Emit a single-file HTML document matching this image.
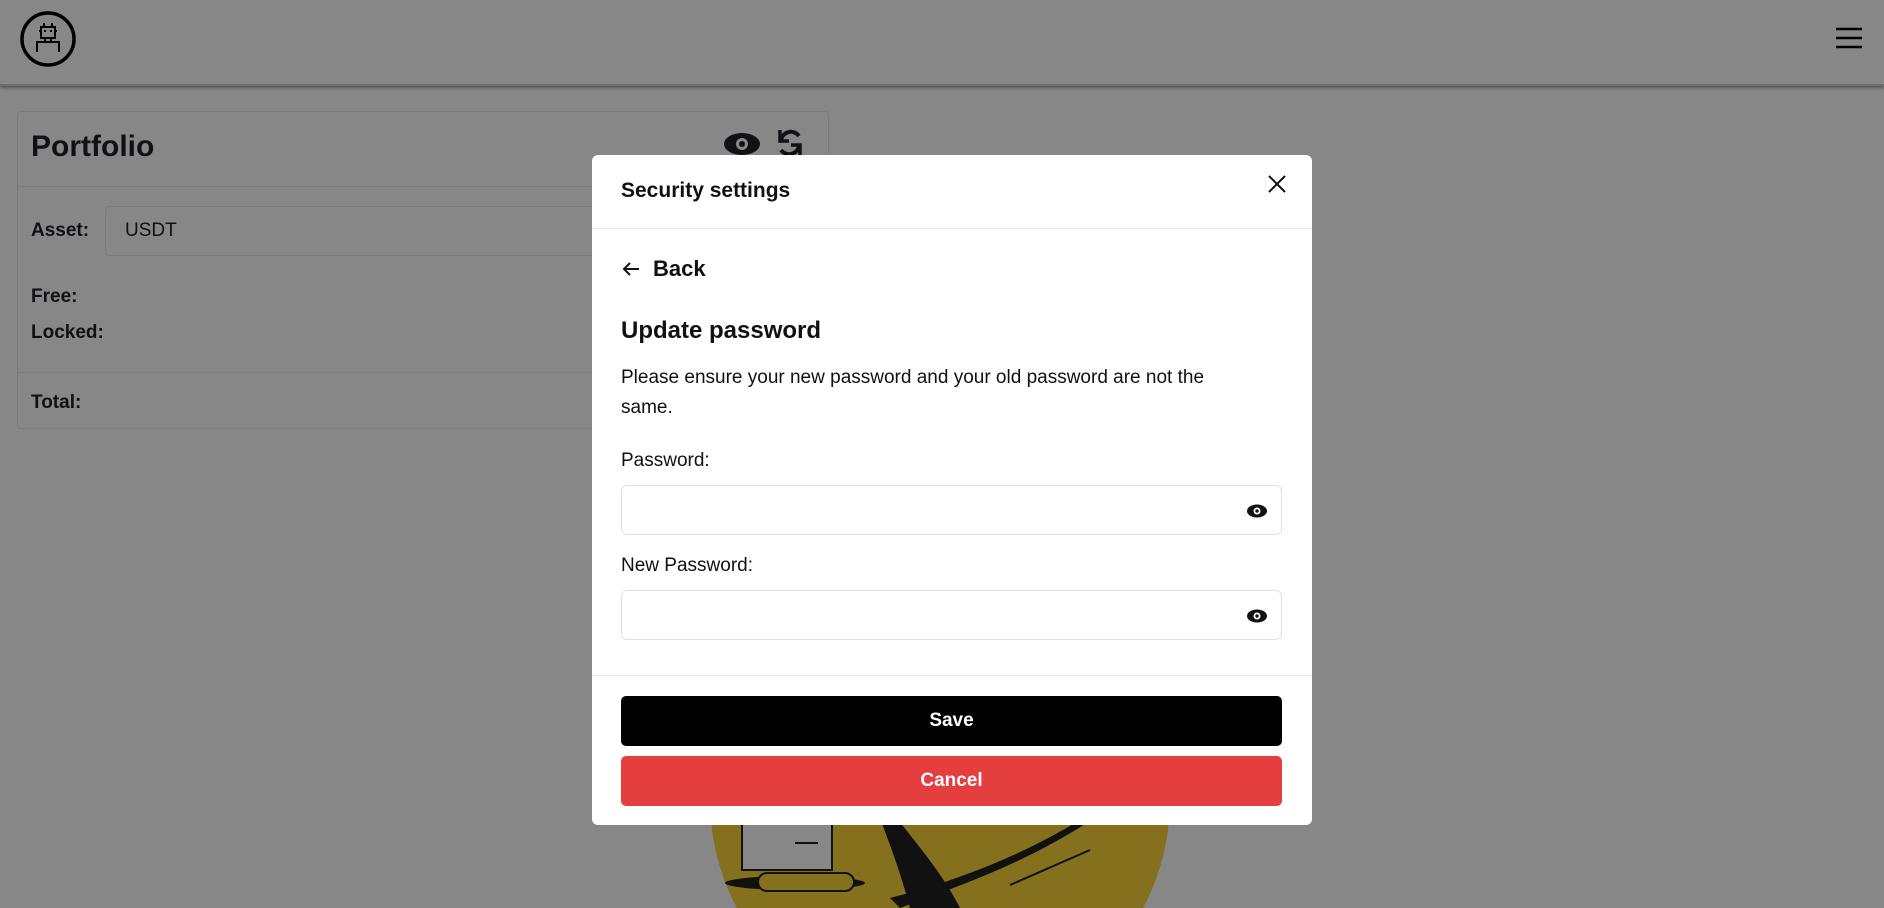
<!DOCTYPE html>
<html><head><meta charset="utf-8"><style>
*{box-sizing:border-box;margin:0;padding:0}
body{width:1884px;height:908px;overflow:hidden;background:#878787;font-family:"Liberation Sans",sans-serif;position:relative;color:#101114}
.hdr{position:absolute;left:0;top:0;width:1884px;height:86px;background:#878787;box-shadow:0 2px 3px rgba(0,0,0,.35);border-bottom:2px solid #6e6e6e}
.card{position:absolute;left:17px;top:111px;width:812px;height:318px;border:1px solid #7b7b7b;border-radius:4px}
.t{position:absolute;white-space:nowrap}
.modal{position:absolute;left:592px;top:155px;width:720px;height:670px;background:#fff;border-radius:6px}
.inp{position:absolute;left:29px;width:661px;height:50px;border:1px solid #dfe0e3;border-radius:6px}
.btn{position:absolute;left:29px;width:661px;height:50px;border-radius:5px;color:#fff;font-weight:bold;font-size:19px;text-align:center;line-height:50px}
</style></head><body>
<div class="hdr">
<svg style="position:absolute;left:18px;top:10px" width="60" height="60" viewBox="0 0 60 60"><circle cx="30" cy="29" r="26" fill="none" stroke="#000" stroke-width="3.5"/>
<g fill="none" stroke="#000" stroke-width="2"><rect x="23" y="17" width="14" height="11"/><line x1="26" y1="13" x2="26" y2="17"/><line x1="34" y1="13" x2="34" y2="17"/><line x1="21" y1="21" x2="23" y2="21"/><line x1="37" y1="21" x2="39" y2="21"/><line x1="27" y1="28" x2="27" y2="32"/><line x1="33" y1="28" x2="33" y2="32"/><path d="M19 42V32H41V42"/></g>
<rect x="26" y="20" width="2" height="2"/><rect x="32" y="20" width="2" height="2"/></svg>
<svg style="position:absolute;left:1835px;top:26px" width="28" height="24"><g stroke="#000" stroke-width="2.4"><line x1="1" y1="3" x2="27" y2="3"/><line x1="1" y1="12" x2="27" y2="12"/><line x1="1" y1="21" x2="27" y2="21"/></g></svg>
</div>
<div class="card">
<div class="t" style="left:13px;top:18px;font-size:30px;font-weight:bold;color:#101114">Portfolio</div>
<svg style="position:absolute;left:705px;top:19px" width="38" height="26" viewBox="0 0 38 26"><ellipse cx="19" cy="13" rx="18" ry="11" fill="#101114"/><circle cx="19" cy="13" r="6" fill="#878787"/><circle cx="19" cy="13" r="3" fill="#101114"/></svg>
<svg style="position:absolute;left:757px;top:14px" width="30" height="34" viewBox="0 0 30 34" fill="none" stroke="#101114" stroke-width="4"><path d="M6 14A10 10 0 0 1 24 10M24 20A10 10 0 0 1 6 24"/><path d="M5 4V15H14M25 30V19H16" stroke-width="3.5"/></svg>
<div style="position:absolute;left:0;right:0;top:74px;border-top:1px solid #7b7b7b"></div>
<div class="t" style="left:13px;top:108px;font-size:19px;font-weight:bold">Asset:</div>
<div style="position:absolute;left:87px;top:94px;width:560px;height:50px;border:1px solid #7b7b7b;border-radius:5px"></div>
<div class="t" style="left:107px;top:108px;font-size:19px">USDT</div>
<div class="t" style="left:13px;top:174px;font-size:19px;font-weight:bold">Free:</div>
<div class="t" style="left:13px;top:210px;font-size:19px;font-weight:bold">Locked:</div>
<div style="position:absolute;left:0;right:0;top:260px;border-top:1px solid #7b7b7b"></div>
<div class="t" style="left:13px;top:280px;font-size:19px;font-weight:bold">Total:</div>
</div>
<svg style="position:absolute;left:700px;top:780px" width="500" height="128" viewBox="0 0 500 128">
<circle cx="240" cy="20" r="230" fill="#85701d"/>
<rect x="42" y="0" width="90" height="90" fill="#878787" stroke="#111" stroke-width="2"/>
<line x1="95" y1="63" x2="118" y2="63" stroke="#111" stroke-width="2"/>
<ellipse cx="95" cy="103" rx="70" ry="7" fill="#111"/><rect x="58" y="93" width="96" height="18" rx="9" fill="#85701d" stroke="#111" stroke-width="2"/>
<path d="M175 0C190 40 230 70 260 128L210 128C200 90 185 50 165 0Z" fill="#111"/>
<path d="M200 128C260 105 340 80 420 20L440 0 410 20C340 70 260 100 190 118Z" fill="#111"/>
<line x1="310" y1="105" x2="390" y2="70" stroke="#111" stroke-width="2"/>
</svg>
<div class="modal">
<div class="t" style="left:29px;top:24px;font-size:21px;font-weight:bold">Security settings</div>
<svg style="position:absolute;left:676px;top:20px" width="18" height="18"><g stroke="#111" stroke-width="2"><line x1="1" y1="1" x2="17" y2="17"/><line x1="17" y1="1" x2="1" y2="17"/></g></svg>
<div style="position:absolute;left:0;right:0;top:73px;border-top:1px solid #e6e7ea"></div>
<svg style="position:absolute;left:30px;top:106px" width="18" height="16"><g fill="none" stroke="#111" stroke-width="2"><path d="M17 8H2M8 2L2 8 8 14"/></g></svg>
<div class="t" style="left:61px;top:101px;font-size:22px;font-weight:bold">Back</div>
<div class="t" style="left:29px;top:162px;font-size:24px;font-weight:bold">Update password</div>
<div class="t" style="left:29px;top:208px;font-size:19px;line-height:30px;white-space:normal;width:640px">Please ensure your new password and your old password are not the same.</div>
<div class="t" style="left:29px;top:295px;font-size:19px">Password:</div>
<div class="inp" style="top:330px"></div>
<svg style="position:absolute;left:655px;top:349px" width="20" height="14" viewBox="0 0 20 14"><ellipse cx="10" cy="7" rx="10" ry="6.5" fill="#111"/><circle cx="10" cy="7" r="3.5" fill="#fff"/><circle cx="10" cy="7" r="1.7" fill="#111"/></svg>
<div class="t" style="left:29px;top:400px;font-size:19px">New Password:</div>
<div class="inp" style="top:435px"></div>
<svg style="position:absolute;left:655px;top:454px" width="20" height="14" viewBox="0 0 20 14"><ellipse cx="10" cy="7" rx="10" ry="6.5" fill="#111"/><circle cx="10" cy="7" r="3.5" fill="#fff"/><circle cx="10" cy="7" r="1.7" fill="#111"/></svg>
<div style="position:absolute;left:0;right:0;top:520px;border-top:1px solid #e6e7ea"></div>
<div class="btn" style="top:541px;background:#000">Save</div>
<div class="btn" style="top:601px;background:#e53e3e">Cancel</div>
</div>
</body></html>
